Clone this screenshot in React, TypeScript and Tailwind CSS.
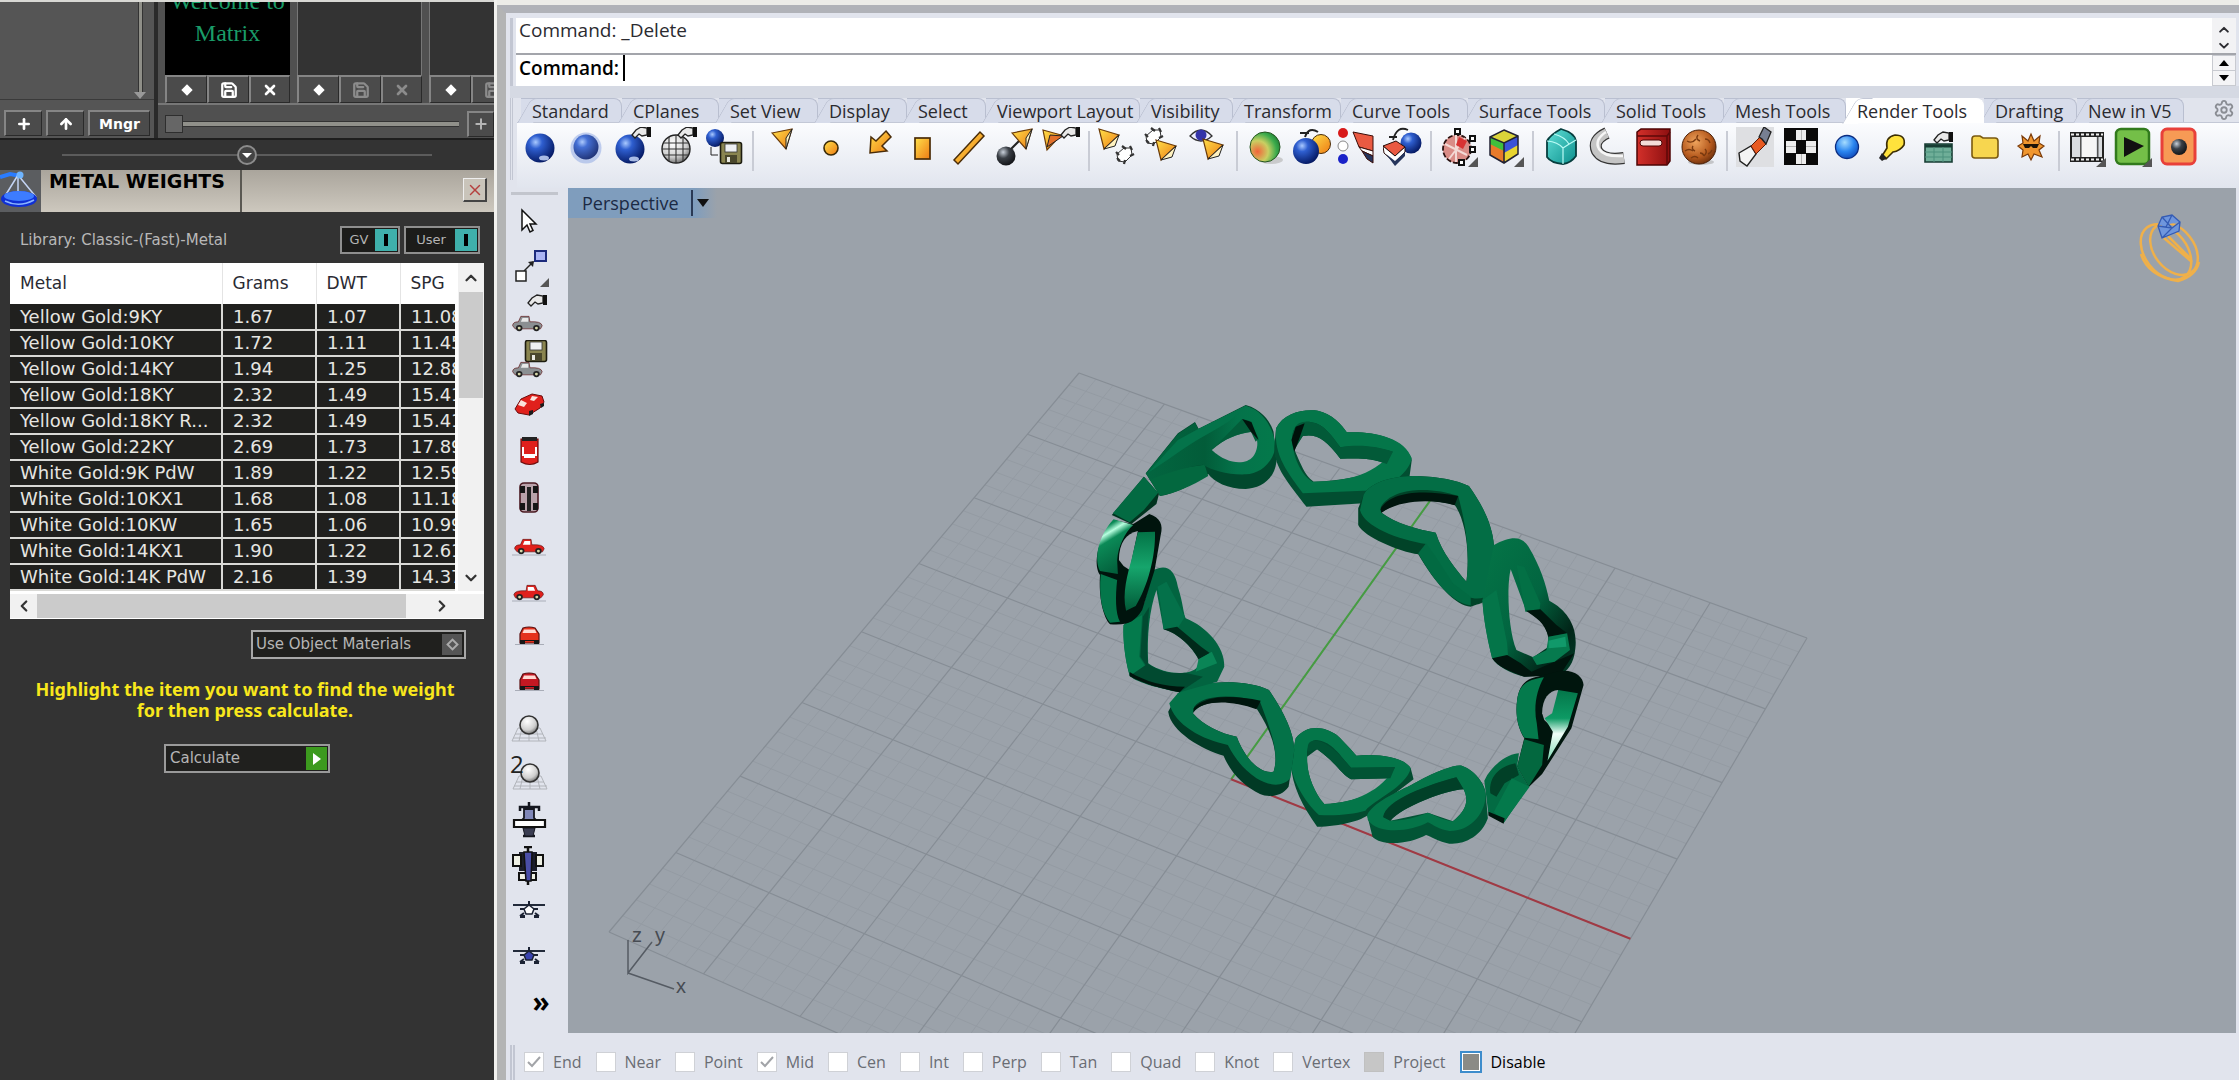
import React from "react";
import { ChevronDown, ChevronLeft, ChevronRight, ChevronUp, X, Plus, Save, ArrowUp, Settings } from "lucide-react";

type Kids = { children: React.ReactNode };

const Ico = ({ children }: Kids) => (
  <svg viewBox="0 0 40 40" className="size-10 shrink-0" aria-hidden="true">
    {children}
  </svg>
);

/* ---------- shared gradients ---------- */
const Defs = () => (
  <svg className="absolute size-0" aria-hidden="true">
    <defs>
      <radialGradient id="gBlue" cx=".35" cy=".3" r=".75">
        <stop offset="0" stopColor="#a9c9ff" />
        <stop offset=".3" stopColor="#2f5fd0" />
        <stop offset="1" stopColor="#03165e" />
      </radialGradient>
      <radialGradient id="gSky" cx=".4" cy=".3" r=".8">
        <stop offset="0" stopColor="#a5dcff" />
        <stop offset=".5" stopColor="#2b86f0" />
        <stop offset="1" stopColor="#0a3fb0" />
      </radialGradient>
      <radialGradient id="gGrey" cx=".4" cy=".3" r=".8">
        <stop offset="0" stopColor="#ffffff" />
        <stop offset=".6" stopColor="#cfcfcf" />
        <stop offset="1" stopColor="#555" />
      </radialGradient>
      <radialGradient id="gBlack" cx=".35" cy=".3" r=".8">
        <stop offset="0" stopColor="#c8d0da" />
        <stop offset=".4" stopColor="#3a3f46" />
        <stop offset="1" stopColor="#0b0c0e" />
      </radialGradient>
      <radialGradient id="gMulti" cx=".25" cy=".65" r=".9">
        <stop offset="0" stopColor="#f2643a" />
        <stop offset=".4" stopColor="#c9cf62" />
        <stop offset=".7" stopColor="#3cab4c" />
        <stop offset="1" stopColor="#136c2c" />
      </radialGradient>
      <radialGradient id="gWood" cx=".4" cy=".35" r=".75">
        <stop offset="0" stopColor="#eea35c" />
        <stop offset=".6" stopColor="#b65a1e" />
        <stop offset="1" stopColor="#5a2508" />
      </radialGradient>
      <linearGradient id="gOr" x1="0" y1="0" x2="1" y2="1">
        <stop offset="0" stopColor="#ffe14a" />
        <stop offset="1" stopColor="#ee7a14" />
      </linearGradient>
      <linearGradient id="gTeal" x1="0" y1="0" x2="1" y2="1">
        <stop offset="0" stopColor="#62e0d8" />
        <stop offset="1" stopColor="#0b8f8c" />
      </linearGradient>
      <linearGradient id="gRed" x1="0" y1="0" x2="1" y2="0">
        <stop offset="0" stopColor="#d3302a" />
        <stop offset="1" stopColor="#8c0f10" />
      </linearGradient>
    </defs>
  </svg>
);

/* ---------- toolbar icon parts ---------- */
const Hand = ({ x, y }: { x: number; y: number }) => (
  <g transform={`translate(${x} ${y})`}>
    <path d="M0 8 4 3 9 0 15 1 15 8 10 9 7 7 3 11Z" fill="#e9e9e9" stroke="#222" strokeWidth="1.3" />
    <path d="M15 0h4v10h-4z" fill="#111" />
  </g>
);
const Floppy = ({ x, y }: { x: number; y: number }) => (
  <g transform={`translate(${x} ${y})`}>
    <rect x=".5" y=".5" width="21" height="21" rx="2" fill="#8a8550" stroke="#1d1c10" strokeWidth="1.6" />
    <rect x="5" y="2" width="12" height="8" fill="#eef0f2" stroke="#333" strokeWidth=".8" />
    <rect x="5" y="13" width="12" height="8" fill="#4a472c" />
    <rect x="7" y="15" width="3" height="5" fill="#e9e9e0" />
  </g>
);
const Spot = ({ x = 0, y = 0 }: { x?: number; y?: number }) => (
  <g transform={`translate(${x} ${y})`}>
    <path d="M0 4 20 0 14 20Z" fill="url(#gOr)" stroke="#6b3b08" strokeWidth="1.2" />
    <path d="M20 0 14 20 14 9Z" fill="#fff2c0" stroke="#222" strokeWidth="1" />
  </g>
);
const SpotDown = ({ x = 0, y = 0 }: { x?: number; y?: number }) => (
  <g transform={`translate(${x} ${y})`}>
    <path d="M0 0 20 6 5 20Z" fill="url(#gOr)" stroke="#6b3b08" strokeWidth="1.2" />
    <path d="M20 6 5 20 16 17Z" fill="#fff2c0" stroke="#222" strokeWidth="1" />
  </g>
);
const Corner = () => <path d="M39 30v10H29Z" fill="#555" />;
const Dots = ({ x, y }: { x: number; y: number }) => (
  <g transform={`translate(${x} ${y})`} fill="#fff" stroke="#333" strokeWidth="1.3">
    <path d="M8 2 15 2 16 9 9 16 2 15 1 8Z" strokeWidth="1" />
    <path d="M6 0l4 3M14 0l2 4M18 8l-4 2M1 12l3 3M8 18l1-4M0 6l3 3" strokeWidth="2.2" />
  </g>
);
const Brick = ({ x, y }: { x: number; y: number }) => (
  <g transform={`translate(${x} ${y})`} stroke="#3a0d08" strokeWidth="1">
    <path d="M0 0 20 4 20 19 6 15Z" fill="#ea5a42" />
    <path d="M6 15 20 19 20 24 9 19Z" fill="#fff" />
    <path d="M9 19 20 24 20 31 14 27Z" fill="#26355c" />
  </g>
);

const toolGroups: { name: string; art: React.ReactNode }[][] = [
  [
    { name: "Render", art: <><circle cx="20" cy="21" r="14.5" fill="url(#gBlue)" /><ellipse cx="24" cy="31" rx="5" ry="2.500" fill="#cfe0ff" opacity=".8" /></> },
    { name: "Render preview", art: <><circle cx="20" cy="21" r="15.500" fill="#7f9be0" opacity=".45" /><circle cx="20" cy="20" r="12.500" fill="url(#gBlue)" opacity=".85" /></> },
    { name: "Render window", art: <><circle cx="18" cy="22" r="14.500" fill="url(#gBlue)" /><ellipse cx="22" cy="32" rx="5" ry="2.500" fill="#cfe0ff" opacity=".8" /><Hand x={20} y={0} /></> },
    { name: "Wire sphere", art: <><circle cx="18" cy="22" r="14" fill="url(#gGrey)" stroke="#222" strokeWidth="1.400" /><path d="M5 16h26M4 22h28M5 28h26M11 10v24M18 8v28M25 10v24" stroke="#333" strokeWidth="1.100" /><Hand x={20} y={0} /></> },
    { name: "Save render", art: <><circle cx="11" cy="11" r="9" fill="url(#gBlue)" /><path d="M7 20v8h7" fill="none" stroke="#222" /><Floppy x={16} y={15} /></> },
  ],
  [
    { name: "Spotlight", art: <Spot x={7} y={2} /> },
    { name: "Point light", art: <circle cx="20" cy="21" r="7" fill="url(#gOr)" stroke="#3a2a08" strokeWidth="1.600" /> },
    { name: "Directional light", art: <path d="M29 4 34 10 25 19 30 24 13 26 14 10 19 14Z" fill="url(#gOr)" stroke="#4a2c08" strokeWidth="1.500" /> },
    { name: "Rectangular light", art: <rect x="12" y="11" width="15" height="21" fill="url(#gOr)" stroke="#4a2c08" strokeWidth="1.700" /> },
    { name: "Linear light", art: <path d="M5 33 31 5 35 9 9 37Z" fill="url(#gOr)" stroke="#4a2c08" strokeWidth="1.500" /> },
    { name: "Edit light", art: <><path d="M12 26 26 12" stroke="#222" strokeWidth="2" /><circle cx="11" cy="29" r="9.500" fill="url(#gBlack)" /><Spot x={17} y={2} /></> },
    { name: "Light by hand", art: <><path d="M2 3 20 8 6 23Z" fill="url(#gOr)" stroke="#6b3b08" strokeWidth="1.200" /><path d="M9 8 22 9 6 20Z" fill="#e3702a" stroke="#222" /><Hand x={20} y={0} /></> },
  ],
  [
    { name: "Light properties", art: <><SpotDown x={2} y={2} /><Dots x={19} y={19} /></> },
    { name: "Set spotlight", art: <><Dots x={2} y={1} /><SpotDown x={13} y={13} /></> },
    { name: "View spotlight", art: <><path d="M1 9Q12-3 23 9 12 19 1 9Z" fill="#eef" stroke="#333" strokeWidth="1.300" /><circle cx="12" cy="8" r="5.500" fill="#3434a8" /><SpotDown x={14} y={12} /></> },
  ],
  [
    { name: "Material", art: <><ellipse cx="26" cy="33" rx="12" ry="4" fill="#bbb" opacity=".7" /><circle cx="20" cy="20" r="15" fill="url(#gMulti)" stroke="#24551f" /></> },
    { name: "Match material", art: <><circle cx="30" cy="17" r="9.500" fill="url(#gOr)" stroke="#4a2c08" /><circle cx="15" cy="24" r="13" fill="url(#gBlue)" /><path d="M9 6h9M14 10Q18-1 27 5" stroke="#222" strokeWidth="2" fill="none" /></> },
    { name: "Layer material", art: <><circle cx="6" cy="6" r="5" fill="#d81a1a" /><circle cx="6" cy="19" r="5" fill="#fff" stroke="#888" /><circle cx="6" cy="32" r="5" fill="#1a22c8" /><Brick x={16} y={5} /></> },
    { name: "Apply material", art: <><circle cx="28" cy="16" r="10.500" fill="url(#gBlue)" /><path d="M0 19 13 14 22 20 12 29Z" fill="#ea5a42" stroke="#2a0d08" /><path d="M0 19 12 29 22 20V25L12 36 1 26Z" fill="#fff" stroke="#2a0d08" /><path d="M3 27 12 34 22 25V29L12 39Z" fill="#26355c" /><path d="M6 10h8M10 13Q14-2 25 3" stroke="#222" strokeWidth="1.800" fill="none" /></> },
  ],
  [
    { name: "Texture mapping", art: <><circle cx="18" cy="22" r="14" fill="#d98c86" stroke="#2a1210" strokeDasharray="5 2" strokeWidth="1.800" /><path d="M6 17 28 28M10 32 26 11M17 8v27" stroke="#f3d9d4" strokeWidth="2" /><path d="M20 10l8 4-4 8-7-4Z" fill="#d83232" /><g fill="#fff" stroke="#111" strokeWidth="2"><path d="M16 2h5v5h-5zM31 9h5v5h-5zM31 20h5v5h-5zM20 33h5v5h-5z" /></g><Corner /></> },
    { name: "Colour cube", art: <><path d="M19 3 33 9 19 16 5 10Z" fill="#d9d43a" /><path d="M5 10 19 16V36L5 28Z" fill="#3fbf3c" /><path d="M5 17 19 24V36L5 28Z" fill="#e87a2a" /><path d="M19 16 33 9V27L19 36Z" fill="#3a52d8" /><path d="M19 26 33 18V27L19 36Z" fill="#e8d430" /><path d="M19 3 33 9V27L19 36 5 28V10ZM5 10 19 16 33 9M19 16V36" fill="none" stroke="#223" strokeWidth="1.500" /><Corner /></> },
  ],
  [
    { name: "Soft edge box", art: <><path d="M20 2Q34 6 35 14V29Q30 36 22 37 10 36 6 30V14Q9 8 20 2Z" fill="url(#gTeal)" stroke="#063e3e" strokeWidth="1.800" /><path d="M6 14Q17 15 22 21 28 17 35 13M22 21V37M13 7Q24 10 28 17" fill="none" stroke="#b9fbf5" strokeWidth="1.200" /></> },
    { name: "Pipe", art: <><path d="M20 6Q5 13 10 24 16 34 37 31" fill="none" stroke="#333" strokeWidth="12" /><path d="M20 6Q5 13 10 24 16 34 37 31" fill="none" stroke="#c4c4c4" strokeWidth="9.500" /><path d="M19 5Q7 13 12 22 17 30 36 29" fill="none" stroke="#f6f6f6" strokeWidth="2.500" /></> },
    { name: "Library", art: <><path d="M4 5 8 2H37V34L34 38H4Z" fill="url(#gRed)" stroke="#4d0505" strokeWidth="1.500" /><path d="M4 9H34L37 5M34 9V38" stroke="#5e0808" strokeWidth="1.500" fill="none" /><rect x="7" y="13" width="22" height="6" rx="3" fill="#f3dcd8" stroke="#4d0505" /></> },
    { name: "Wood", art: <><ellipse cx="22" cy="35" rx="13" ry="3" fill="#aaa" opacity=".6" /><circle cx="20" cy="20" r="17" fill="url(#gWood)" stroke="#4a2008" /><path d="M8 14q5 3 9-2M6 24q4-3 8 0M12 31q4-3 7 0M19 8q-3 4 2 6M14 19q-2 3 2 5M26 22q3 3-1 7M26 12q4 0 5 4M21 26q3 0 4 3M29 27q3-1 4-4" fill="none" stroke="#7a3a10" strokeWidth="1.400" /></> },
  ],
  [
    { name: "Brush", art: <><rect x="1" y="0" width="38" height="40" fill="#dedfe2" /><path d="M4 26 16 19 21 27 12 39 5 34Z" fill="#f4f4f4" stroke="#222" strokeWidth="1.400" /><path d="M16 19 25 10 31 17 21 27Z" fill="#e85a22" stroke="#5a1a08" /><path d="M24 10 29 0 36 5 31 17 27 12Z" fill="#777f92" stroke="#222" strokeWidth="1.300" /></> },
    { name: "Checker", art: <><path d="M3 1h34v37H3z" fill="#0a0a0a" /><path d="M15 3h10v10H15zM5 14h10v12H5zM25 14h10v12H25zM15 27h10v10H15z" fill="#ededed" /><path d="M5 19h10v1H5zM25 19h10v1H25zM20 3v10h1V3zM20 27v10h1V27z" fill="#b5b5b5" /></> },
    { name: "Environment", art: <circle cx="20" cy="20" r="11.500" fill="url(#gSky)" stroke="#0b2c80" strokeWidth="1.300" /> },
    { name: "Lights", art: <><path d="M9 29 14 21Q12 10 22 8 33 8 31 18 27 24 20 25L13 32 8 31Z" fill="#ffe23c" stroke="#3c2e04" strokeWidth="1.600" /><path d="M9 26 14 31 9 34 6 31Z" fill="#222" /></> },
    { name: "Ground plane", art: <><Hand x={15} y={5} /><path d="M6 17h27v18H6z" fill="#6fae98" stroke="#173c33" strokeWidth="1.600" /><path d="M6 19h27" stroke="#173c33" strokeWidth="3" /><path d="M6 25h27M6 30h27M15 20v15M24 20v15" stroke="#4d907c" /></> },
    { name: "Folder", art: <path d="M7 12Q7 9 10 9H15L18 11H30Q33 11 33 14V28Q33 31 30 31H10Q7 31 7 28Z" fill="#f7d64f" stroke="#7a5a10" strokeWidth="1.600" /> },
    { name: "Sun", art: <><path d="M20 7 23 14 29 9 28 16 33 19 28 23 31 30 23 27 20 33 17 27 11 30 12 23 7 19 12 16 11 9 17 14Z" fill="#f0962e" stroke="#7a3a08" strokeWidth="1.200" /><path d="M12 17h16l-2 4h-4l-2-2-2 2h-4z" fill="#1e1408" /></> },
  ],
  [
    { name: "Animation", art: <><path d="M3 5h34v30H3z" fill="#222" /><path d="M5 10h30v20H5z" fill="#d9dce0" /><path d="M13 10h1.500v20H13zM30 10h1.500v20H30z" fill="#555" /><path d="M15 10h14v20H15z" fill="#f6f6f6" /><path d="M4 7.500h32M4 32.500h32" stroke="#eee" strokeWidth="2" strokeDasharray="3 2" /><path d="M39 31v9H29Z" fill="#555" /></> },
    { name: "Play", art: <><rect x="3" y="2" width="33" height="35" rx="5" fill="#74bf48" stroke="#317a1c" strokeWidth="2.500" /><path d="M11 10V30L31 19Z" fill="#111" /><path d="M39 31v9H29Z" fill="#555" /></> },
    { name: "Record", art: <><rect x="3" y="2" width="33" height="35" rx="5" fill="#f79a55" stroke="#e8403a" strokeWidth="3" /><circle cx="20" cy="20" r="8" fill="url(#gBlack)" /></> },
  ],
];

/* ---------- side bar ---------- */
const Car = ({ body, flip = false, glass = "#fff" }: { body: string; flip?: boolean; glass?: string }) => (
  <g transform={flip ? "translate(36 6) scale(-.82 .78)" : "translate(4 6) scale(.82 .78)"}>
    <path d="M2 24Q2 19 9 19L12 12H22L23 19Q37 18 38 24L36 28H5Z" fill={body} stroke="#5b1010" strokeWidth=".8" />
    <path d="M14 14h7v5h-9z" fill={glass} />
    <circle cx="10" cy="27" r="4" fill="#222" />
    <circle cx="31" cy="27" r="4" fill="#222" />
    <circle cx="10" cy="27" r="1.800" fill="#d8d8a8" />
    <circle cx="31" cy="27" r="1.800" fill="#d8d8a8" />
  </g>
);
const Shade = () => <path d="M3 31h34" stroke="#a9adb8" />;
const FrontCar = ({ body }: { body: string }) => (
  <>
    <path d="M14 12Q20 10 26 12L30 18V27H11V18Z" fill={body} stroke="#5b1010" strokeWidth="1.200" />
    <path d="M15 13.500h11l1.500 3.500h-14z" fill="#ffd9d2" />
    <path d="M11 24h5v4h-5zM25 24h5v4h-5zM16 24h9v1h-9z" fill="#161616" />
    <path d="M6 28.500h29" stroke="#a9adb8" />
  </>
);
const GridBall = () => (
  <>
    <path d="M9 20H31L37 33H3ZM6 26H34M4 30H37M13 20 10 33M20 20V33M27 20 30 33" fill="none" stroke="#b1b4ba" />
    <circle cx="20" cy="17" r="9" fill="url(#gGrey)" stroke="#333" strokeWidth="1.600" />
  </>
);
const FrontPlane = ({ fill }: { fill: string }) => (
  <>
    <path d="M4 13H36" stroke="#222a3a" strokeWidth="2" />
    <path d="M20 9v4M11 17h18M15 21l-4 3M26 21l4 3" stroke="#1b2233" strokeWidth="2" />
    <path d="M20 13l5 4-2 5h-6l-2-5z" fill={fill} stroke="#1b2233" strokeWidth="1.500" />
    <path d="M11 23h5v3h-5zM25 23h5v3h-5z" fill="#1b2233" />
  </>
);
const sideTools: { name: string; art: React.ReactNode }[] = [
  { name: "Select", art: <><path d="M13 8V28L18 23 21 30 24 28.500 21 22H27Z" fill="#fff" stroke="#111" strokeWidth="1.500" /></> },
  { name: "Move", art: <><rect x="26" y="3" width="11" height="10" fill="#aab4f4" stroke="#1c2a7c" strokeWidth="2" /><path d="M15 23 24 14" stroke="#222" strokeWidth="1.500" /><path d="M25 13l-1 6-5-5z" fill="#222" /><rect x="7" y="23" width="10" height="10" fill="#fff" stroke="#222" strokeWidth="1.500" /><path d="M40 30v9H31Z" fill="#555" /></> },
  { name: "Set view", art: <><Hand x={19} y={1} /><g transform="translate(-2 7)"><Car body="#8b8f92" glass="#e8e8e8" /></g></> },
  { name: "Save view", art: <><g transform="translate(16 0)"><Floppy x={0} y={0} /></g><g transform="translate(-2 7)"><Car body="#8b8f92" glass="#e8e8e8" /></g></> },
  { name: "Perspective view", art: <><path d="M6 23 12 13 23 8 33 10 35 16 31 22 20 29 9 27Z" fill="#e0201c" stroke="#6b0c0c" strokeWidth="1" /><path d="M12 14l6 3-3 4-6-2zM23 10l6 1-4 4-4-1z" fill="#fbe2dc" /><path d="M20 25l4-1v4l-4 2zM31 18l4-1v3l-3 2z" fill="#1b1b1b" /></> },
  { name: "Top view", art: <><path d="M12 7h17v23q-8 5-17 0z" fill="#e0201c" stroke="#6b0c0c" strokeWidth="1.200" /><path d="M13 5h15v4H13z" fill="#222" /><path d="M14 15v9M27 15v9" stroke="#fff" strokeWidth="2" /><path d="M15 22h11v4H15z" fill="#fff" /></> },
  { name: "Bottom view", art: <><rect x="11" y="5" width="18" height="29" rx="4" fill="#b9a2aa" stroke="#4a1a22" strokeWidth="1.600" /><path d="M11 8h5v7h-5zM24 8h5v7h-5zM11 25h5v7h-5zM24 25h5v7h-5z" fill="#151515" /><path d="M20 9v24" stroke="#222" strokeWidth="4" /></> },
  { name: "Left view", art: <><Car body="#e0201c" /><Shade /></> },
  { name: "Right view", art: <><Car body="#e0201c" flip /><Shade /></> },
  { name: "Front view", art: <FrontCar body="#e5301c" /> },
  { name: "Back view", art: <FrontCar body="#c41822" /> },
  { name: "World CPlane", art: <GridBall /> },
  { name: "CPlane 2", art: <><g transform="translate(1 2)"><GridBall /></g><text x="1" y="19" fontSize="24" fontFamily="Open Sans, sans-serif" fill="#222">2</text></> },
  { name: "Plane top", art: <><path d="M20 2v4M11 11V7H30v4M20 33v4M14 36h12" stroke="#14161f" strokeWidth="2.500" fill="none" /><path d="M15 9h10v9l3 3H12l3-3z" fill="#8087b8" stroke="#14161f" strokeWidth="1.800" /><path d="M14 28h12l-2 8h-8z" fill="#3a3d52" stroke="#14161f" /><path d="M5 20h31v7H5z" fill="#fff" stroke="#111" strokeWidth="2.200" /></> },
  { name: "Plane bottom", art: <><path d="M15 1h8M19 1v5M19 33v6" stroke="#111" strokeWidth="2.500" /><path d="M10 6h18v19H10z" fill="#1b1d2c" /><path d="M4 9h8v11H4zM27 9h7v11h-7zM10 27h17v7H10z" fill="#eef0e4" stroke="#111" strokeWidth="2" /><path d="M15 6h8l-1 29h-5z" fill="#4a4ea8" stroke="#111" strokeWidth="1.500" /></> },
  { name: "Plane front", art: <FrontPlane fill="#fff" /> },
  { name: "Plane back", art: <FrontPlane fill="#3a44b0" /> },
];

const tabs: [string, string][] = [
  ["Standard", "w-[101px]"], ["CPlanes", "w-[97px]"], ["Set View", "w-[99px]"], ["Display", "w-[89px]"],
  ["Select", "w-[79px]"], ["Viewport Layout", "w-[154px]"], ["Visibility", "w-[93px]"], ["Transform", "w-[108px]"],
  ["Curve Tools", "w-[127px]"], ["Surface Tools", "w-[137px]"], ["Solid Tools", "w-[119px]"], ["Mesh Tools", "w-[122px]"],
  ["Render Tools", "w-[138px]"], ["Drafting", "w-[93px]"], ["New in V5", "w-[107px]"],
];

/* ---------- perspective grid ---------- */
const P00 = [609, 932], P10 = [1423, 1292], P11 = [1807, 638], P01 = [1079, 373];
const project = (() => {
  const dx1 = P10[0] - P11[0], dx2 = P01[0] - P11[0], sx = P00[0] - P10[0] + P11[0] - P01[0];
  const dy1 = P10[1] - P11[1], dy2 = P01[1] - P11[1], sy = P00[1] - P10[1] + P11[1] - P01[1];
  const den = dx1 * dy2 - dx2 * dy1;
  const g = (sx * dy2 - dx2 * sy) / den, h = (dx1 * sy - sx * dy1) / den;
  const a = P10[0] - P00[0] + g * P10[0], b = P01[0] - P00[0] + h * P01[0];
  const d = P10[1] - P00[1] + g * P10[1], e = P01[1] - P00[1] + h * P01[1];
  return (u: number, v: number) => {
    const w = g * u + h * v + 1;
    return `${((a * u + b * v + P00[0]) / w).toFixed(1)} ${((d * u + e * v + P00[1]) / w).toFixed(1)}`;
  };
})();
const N = 40;
const gridPath = (major: boolean) => {
  let s = "";
  for (let i = 0; i <= N; i++) {
    if ((i % 5 === 0) !== major) continue;
    const t = i / N;
    s += `M${project(t, 0)}L${project(t, 1)}M${project(0, t)}L${project(1, t)}`;
  }
  return s;
};

const Scene = () => (
  <svg viewBox="568 188 1668 845" preserveAspectRatio="xMidYMid slice" className="absolute inset-0 size-full" role="img" aria-label="Heart ring model">
    <defs>
      <linearGradient id="wallL" x1="0" y1="0" x2="0" y2="1">
        <stop offset="0" stopColor="#037346" /><stop offset=".45" stopColor="#16a56c" /><stop offset="1" stopColor="#025a38" />
      </linearGradient>
      <linearGradient id="shineL" x1="0" y1="0" x2=".4" y2="1">
        <stop offset="0" stopColor="#047848" /><stop offset=".2" stopColor="#0b8a57" /><stop offset=".32" stopColor="#b8ffe0" /><stop offset=".45" stopColor="#0b8a57" /><stop offset="1" stopColor="#03603c" />
      </linearGradient>
      <linearGradient id="shineR" x1="0" y1="0" x2="0" y2="1">
        <stop offset="0" stopColor="#04764a" /><stop offset=".4" stopColor="#0d9a64" /><stop offset=".62" stopColor="#f1fff9" /><stop offset="1" stopColor="#7fd9b4" />
      </linearGradient>
      <linearGradient id="body4" x1="0" y1="0" x2="1" y2="1">
        <stop offset="0" stopColor="#047547" /><stop offset=".5" stopColor="#026540" /><stop offset=".8" stopColor="#012518" /><stop offset="1" stopColor="#02402a" />
      </linearGradient>
      <linearGradient id="face1" x1="0" y1="0" x2="1" y2="0">
        <stop offset="0" stopColor="#036640" /><stop offset=".45" stopColor="#025c39" /><stop offset=".7" stopColor="#04734a" /><stop offset="1" stopColor="#04794b" />
      </linearGradient>
    </defs>
    <path d={gridPath(false)} stroke="#949ba3" fill="none" />
    <path d={gridPath(true)} stroke="#868d95" fill="none" strokeWidth="1.200" />
    <path d={`M${project(0.5, 0.5)}L${project(0.5, 1)}`} stroke="#469c42" strokeWidth="2" />
    <path d={`M${project(0.5, 0.5)}L${project(1, 0.5)}`} stroke="#a03a44" strokeWidth="2" />

    <g transform="translate(1060 370) scale(.35714 .33333)">
      {/* upper left side-on heart */}
      <path d="M240 310 330 190 378 156 388 176 520 105C570 120 590 160 598 185L606 275C600 330 560 355 520 357 470 357 430 335 415 312 370 345 320 372 280 378Z" fill="#01482d" />
      <path d="M240 310 405 284 415 318C370 348 320 370 280 378Z" fill="#03683f" />
      <path d="M242 308 330 192 378 158 388 178 520 107C570 122 595 170 604 225 600 275 560 312 520 313 470 315 425 300 400 284 340 294 290 312 252 330Z" fill="url(#face1)" />
      <path d="M388 176 520 107C500 140 450 170 400 200 350 230 290 280 246 308L330 210Z" fill="#04734a" />
      <path d="M425 240C460 205 500 190 535 185 560 200 555 240 540 260 520 285 470 285 425 240Z" fill="#9ba2aa" />
      <path d="M425 240 510 147 530 152 556 205 548 215 535 186C500 190 460 205 425 240Z" fill="#035d3a" />
      <path d="M510 147 536 156 556 210 535 186Z" fill="#01140d" />
      {/* top heart */}
      <path fillRule="evenodd" d="M605 175C625 130 680 116 722 122 760 130 790 165 803 187 870 183 965 200 985 270L978 325 850 400 690 410C640 340 598 290 600 230ZM655 235C680 300 690 320 710 335 790 332 860 320 915 282 870 262 830 265 785 266 745 210 720 190 680 198Z" fill="#024e31" />
      <path fillRule="evenodd" d="M605 175C625 130 680 116 722 122 760 130 790 165 803 187 870 183 965 200 985 265 975 320 900 365 850 362L680 370C640 310 598 260 605 175ZM650 215C655 270 680 320 708 335 790 332 870 325 932 245 880 228 830 225 785 232 750 180 730 155 690 155 660 160 648 180 650 215Z" fill="#047649" />
      <path d="M650 215C650 170 665 155 690 155 730 155 750 180 785 232 840 222 890 230 932 245L915 282C870 262 830 265 785 266 745 210 720 190 680 198L656 240Z" fill="#025a38" />
      <path d="M648 210 660 170 685 160 672 200 656 245Z" fill="#00110a" />
      {/* upper right heart */}
      <path fillRule="evenodd" d="M850 375C870 335 930 318 1000 318 1060 320 1110 330 1145 348 1180 400 1210 460 1215 525L1235 640C1220 690 1180 700 1150 710 1110 710 1050 640 1003 553 950 545 850 500 835 465V415ZM900 428C940 460 1000 478 1052 488 1070 550 1110 600 1138 635 1150 530 1130 440 1105 405 1040 385 950 385 900 428Z" fill="#014328" />
      <path fillRule="evenodd" d="M850 375C870 335 930 318 1000 318 1060 320 1110 330 1145 348 1180 400 1210 460 1215 525L1235 620C1220 680 1180 695 1140 680 1090 640 1050 580 1025 522 950 510 850 470 840 420ZM900 428C940 460 1000 478 1052 488 1070 550 1110 600 1138 635 1150 530 1130 440 1115 378 1040 350 930 350 898 412Z" fill="#036e45" />
      <path d="M1003 550 1025 520 1052 560 1100 640 1150 680 1150 706C1100 700 1050 640 1003 550Z" fill="#026a42" />
      <path d="M897 418C920 370 1000 355 1115 378L1105 406C1040 385 950 390 900 428Z" fill="#00150d" />
      {/* right heart */}
      <path fillRule="evenodd" d="M1215 525C1260 500 1290 495 1312 530 1345 590 1360 640 1370 692 1420 720 1450 770 1443 835 1440 880 1420 905 1400 915L1300 920C1260 910 1225 890 1210 865 1195 800 1185 740 1183 690ZM1262 598C1250 650 1255 780 1278 840L1325 862 1368 830C1370 790 1360 750 1305 722Z" fill="url(#body4)" />
      <path d="M1183 690 1222 660 1252 820 1255 865 1230 880 1210 865C1195 800 1185 740 1183 690Z" fill="#047549" />
      <path d="M1210 865 1252 855 1290 880 1320 905 1440 850 1400 915 1300 920C1260 905 1225 890 1210 865Z" fill="#01140d" />
      <path d="M1278 585 1300 590 1345 700 1342 725 1303 725 1290 650Z" fill="#037045" />
      <path d="M1305 722 1345 718 1390 765 1420 790 1368 800C1355 755 1335 745 1305 722Z" fill="#00150d" />
      <path d="M1368 800 1420 790 1428 840 1385 875 1335 885 1322 862 1362 840Z" fill="#067a4e" />
      <path d="M1368 812 1415 800 1418 830 1368 835Z" fill="#11996a" />
      {/* far right heart */}
      <path d="M1280 990C1285 950 1300 930 1330 922L1400 903C1440 898 1465 920 1466 945L1432 1075 1350 1212 1312 1252 1280 1190 1300 1105C1280 1070 1275 1030 1280 990Z" fill="#00150d" />
      <path d="M1280 990C1285 950 1300 930 1355 922 1335 960 1325 1010 1335 1060L1340 1108 1300 1103C1280 1070 1275 1030 1280 990Z" fill="#047a4c" />
      <path d="M1300 1108 1355 1125 1350 1185 1312 1250 1280 1190Z" fill="#03683f" />
      <path d="M1350 1030C1350 985 1370 962 1395 960L1385 1080 1356 1050Z" fill="#9ba2aa" />
      <path d="M1395 960 1450 970 1422 1070 1365 1172 1380 1085 1357 1045 1378 1030Z" fill="url(#shineR)" />
      {/* small right link */}
      <path d="M1188 1232C1210 1180 1260 1150 1285 1150L1280 1190 1312 1250 1242 1360 1200 1335Z" fill="#036b43" />
      <path d="M1205 1270C1200 1220 1230 1190 1275 1180L1285 1215 1245 1240 1222 1280Z" fill="#014027" />
      <path d="M1265 1225 1315 1250 1242 1358 1215 1325Z" fill="#04794b" />
      <path d="M1200 1325 1245 1345 1242 1361 1200 1337Z" fill="#01140d" />
      {/* bottom heart, middle */}
      <path fillRule="evenodd" d="M660 1105C690 1062 740 1068 775 1095 800 1120 820 1145 830 1157 890 1150 965 1162 982 1195L990 1228 870 1325C860 1350 780 1370 720 1370 680 1310 650 1250 646 1180ZM692 1160C690 1210 710 1265 740 1302 830 1300 900 1260 925 1225L815 1228C790 1215 770 1175 720 1138Z" fill="#024b2f" />
      <path fillRule="evenodd" d="M660 1105C690 1062 740 1068 775 1095 800 1120 820 1145 830 1157 890 1150 965 1162 982 1195 970 1250 880 1290 855 1322 820 1332 780 1338 725 1335 680 1290 645 1220 646 1170ZM692 1160C690 1210 710 1265 740 1302 830 1300 900 1260 938 1192L815 1193C790 1165 760 1110 715 1110 695 1115 690 1140 692 1160Z" fill="#047649" />
      <path d="M695 1145C690 1120 700 1110 720 1112 760 1120 790 1165 815 1193L938 1192 925 1225 815 1228C790 1215 770 1175 720 1138Z" fill="#015334" />
      {/* bottom heart, right */}
      <path fillRule="evenodd" d="M860 1335C880 1290 960 1260 1000 1235 1060 1200 1110 1182 1125 1187 1160 1200 1190 1240 1192 1270L1198 1345C1180 1400 1130 1425 1090 1421 1060 1415 1040 1400 1025 1395 980 1422 900 1430 875 1400ZM925 1352 1030 1328 1100 1354C1140 1320 1145 1290 1130 1258 1080 1260 960 1310 925 1352Z" fill="#025435" />
      <path fillRule="evenodd" d="M860 1335C880 1290 960 1260 1000 1235 1060 1200 1110 1182 1125 1187 1160 1200 1190 1240 1192 1275 1190 1340 1140 1385 1090 1383 1065 1380 1045 1365 1030 1357 985 1385 890 1395 862 1350ZM905 1340 925 1352C970 1352 1000 1340 1030 1328 1050 1335 1070 1350 1100 1354 1140 1320 1145 1290 1130 1258L1110 1222C1040 1240 920 1290 905 1340Z" fill="#047448" />
      <path d="M905 1342C910 1290 1030 1245 1110 1222L1130 1258C1080 1260 960 1310 925 1352Z" fill="#014028" />
      {/* bottom left heart */}
      <path fillRule="evenodd" d="M330 970C380 930 520 925 585 960 630 1030 660 1100 655 1150L640 1250C620 1282 580 1282 560 1272 520 1250 480 1215 458 1157 400 1140 310 1085 303 1025ZM372 1030C400 1065 450 1092 495 1100 515 1160 560 1215 598 1205 615 1150 590 1080 550 1015 480 990 400 985 372 1030Z" fill="#013a25" />
      <path fillRule="evenodd" d="M330 970C380 930 520 925 585 960 630 1030 660 1100 655 1150L645 1225C620 1255 580 1245 550 1225 510 1195 490 1165 470 1125 400 1110 320 1065 306 1000ZM372 1030C400 1065 450 1092 495 1100 515 1160 560 1215 598 1205 615 1150 590 1080 560 995 480 970 400 975 376 1010Z" fill="#047248" />
      <path d="M374 1015C410 975 480 975 562 992L550 1018C480 990 400 990 374 1025Z" fill="#00150d" />
      {/* left lower heart */}
      <path fillRule="evenodd" d="M262 600C300 580 322 600 330 650 345 700 345 730 352 745 410 770 462 830 460 890L440 935 335 967C280 955 220 940 195 918 180 860 176 800 178 765L235 700ZM270 660C250 720 243 800 247 880 280 905 320 912 350 908 380 905 392 890 388 868 370 830 325 785 290 778Z" fill="#026440" />
      <path d="M178 765 230 735 222 860 240 890 225 925 195 915C180 860 176 800 178 765Z" fill="#047a4c" />
      <path d="M232 740 250 710C243 790 243 850 247 882 290 912 320 910 350 908L400 920 335 967C280 955 230 940 195 918L240 885 225 860Z" fill="#014a30" />
      <path d="M195 906C240 935 290 950 350 950L335 967C280 955 230 940 195 918Z" fill="#00150d" />
      <path d="M273 650 298 635 350 740 325 782 290 778 283 710Z" fill="#04714a" />
      <path d="M290 778 328 770 395 830 420 850 388 868C370 830 330 790 290 778Z" fill="#01291a" />
      <path d="M388 868 425 845 440 880 380 905Z" fill="#0a8556" />
      {/* left heart */}
      <path d="M150 450 205 462 250 432C280 442 290 465 282 495L265 600 230 720C210 755 190 767 140 763 120 740 108 680 112 615 95 590 98 520 150 450Z" fill="#00140d" />
      <path d="M150 448 205 465C180 490 163 530 160 570L162 612 112 603C95 570 105 500 150 448Z" fill="url(#shineL)" />
      <path d="M114 612 160 630C155 680 155 730 168 755L140 758C118 730 108 680 114 612Z" fill="#04764a" />
      <path d="M165 570C165 520 185 490 218 483L195 600 178 588Z" fill="#9ba2aa" />
      <path d="M218 487 266 485C268 560 245 650 212 708L185 722C173 670 190 610 200 570Z" fill="url(#wallL)" />
      {/* left link */}
      <path d="M235 320 277 372 270 402 200 462 145 435Z" fill="#01331f" />
      <path d="M235 320 275 368 235 420 195 457 148 430Z" fill="#036a42" />
    </g>

    <g stroke="#555b63" strokeWidth="1.500" fill="none">
      <path d="M628 940V973L652 942M628 973 674 989" />
    </g>
    <g fontFamily="Liberation Sans, sans-serif" fontSize="20" fill="#474c53">
      <text x="632" y="942">z</text>
      <text x="655" y="942">y</text>
      <text x="676" y="993">x</text>
    </g>

    <g fill="none" stroke="#efb04a" strokeWidth="2.500">
      <ellipse cx="2166" cy="252" rx="21" ry="31" transform="rotate(-38 2166 252)" />
      <ellipse cx="2174" cy="249" rx="20" ry="29" transform="rotate(-38 2174 249)" />
      <path d="M2164 238 2192 262M2168 236 2190 258M2141 254Q2148 276 2178 281 2196 276 2199 262" />
    </g>
    <path d="M2158 226 2162 217 2172 215 2180 222 2179 231 2162 238Z M2158 226 2172 228 2180 222M2162 217 2172 228 2162 238M2172 215 2166 227" fill="#6f96dc" stroke="#345bb4" strokeWidth="1.300" />
  </svg>
);

/* ---------- left panel ---------- */
const metals: string[][] = [
  ["Yellow Gold:9KY", "1.67", "1.07", "11.08"],
  ["Yellow Gold:10KY", "1.72", "1.11", "11.45"],
  ["Yellow Gold:14KY", "1.94", "1.25", "12.88"],
  ["Yellow Gold:18KY", "2.32", "1.49", "15.41"],
  ["Yellow Gold:18KY R...", "2.32", "1.49", "15.41"],
  ["Yellow Gold:22KY", "2.69", "1.73", "17.89"],
  ["White Gold:9K PdW", "1.89", "1.22", "12.59"],
  ["White Gold:10KX1", "1.68", "1.08", "11.18"],
  ["White Gold:10KW", "1.65", "1.06", "10.99"],
  ["White Gold:14KX1", "1.90", "1.22", "12.61"],
  ["White Gold:14K PdW", "2.16", "1.39", "14.37"],
];

const bevel = "flex items-center justify-center border-t-2 border-l-2 border-r border-b border-t-[#858585] border-l-[#858585] border-r-[#2a2a2a] border-b-[#2a2a2a] bg-[#4b4b4b] text-white";

const SlotButtons = ({ dim = false }: { dim?: boolean }) => (
  <div className="flex">
    <button aria-label="Marker" className={`${bevel} h-7 w-[42px] shrink-0`}><span className="size-2 rotate-45 bg-white" /></button>
    <button aria-label="Save" className={`${bevel} h-7 w-[42px] shrink-0`}><Save className={dim ? "size-[18px] text-[#8c8c8c]" : "size-[18px]"} strokeWidth={3} /></button>
    <button aria-label="Clear" className={`${bevel} h-7 w-[41px] shrink-0`}><X className={dim ? "size-4 text-[#8c8c8c]" : "size-4"} strokeWidth={4} /></button>
  </div>
);

const LeftPanel = () => (
  <aside className="flex w-[494px] shrink-0 flex-col border-t-2 border-[#d8d8d4] bg-[#333333] font-['DejaVu_Sans',sans-serif]">
    <div className="flex h-[138px] overflow-hidden border-b-2 border-[#1e1e1e]">
      <div className="flex w-[158px] shrink-0 flex-col border-r-4 border-[#2a2a2a] bg-[#555555]">
        <div className="flex h-[98px] justify-end border-b border-[#3a3a3a] pr-2">
          <div className="flex flex-col items-center">
            <div className="w-[5px] flex-1 border-x border-[#333] bg-[#8f8f88]" />
            <div className="border-x-[6px] border-t-[7px] border-x-transparent border-t-[#999]" />
          </div>
        </div>
        <div className="flex flex-1 items-center gap-1 px-1 pt-2">
          <button aria-label="Add" className={`${bevel} h-[26px] w-[38px]`}><Plus className="size-4" strokeWidth={4} /></button>
          <button aria-label="Up" className={`${bevel} h-[26px] w-[38px]`}><ArrowUp className="size-4" strokeWidth={4} /></button>
          <button className={`${bevel} h-[26px] flex-1 text-sm font-bold`}>Mngr</button>
        </div>
      </div>
      <div className="flex min-w-0 flex-1 flex-col bg-[#505050]">
        <div className="flex gap-[7px] overflow-hidden border-b-2 border-[#777] pl-[7px]">
          <div className="w-[125px] shrink-0">
            <div className="flex h-[73px] flex-col justify-end overflow-hidden bg-black pb-[26px] text-center font-['Liberation_Serif',serif] text-2xl leading-8 text-[#1a9c68]">
              <span className="whitespace-nowrap">Welcome to</span>
              <span>Matrix</span>
            </div>
            <SlotButtons />
          </div>
          <div className="w-[125px] shrink-0">
            <div className="h-[73px] border-x border-[#777] bg-[#333]" />
            <SlotButtons dim />
          </div>
          <div className="w-[125px] shrink-0">
            <div className="h-[73px] border-l border-[#777] bg-[#333]" />
            <SlotButtons dim />
          </div>
        </div>
        <div className="flex flex-1 items-center pt-1 pl-[7px]">
          <span className="h-[18px] w-[18px] border border-[#2e2e2e] bg-[#666]" />
          <span className="h-[6px] flex-1 border-y border-[#333] bg-[#90908a]" />
          <button aria-label="More" className={`${bevel} ml-2 h-[26px] w-[27px]`}><Plus className="size-4 text-[#b5b5b5]" strokeWidth={3} /></button>
        </div>
      </div>
    </div>
    <div className="flex h-[30px] items-center px-[62px]">
      <span className="h-[2px] flex-1 bg-[#5c5c5c]" />
      <button aria-label="Collapse" className="flex size-5 items-center justify-center rounded-full border-2 border-[#8c8c8c] bg-[#444]">
        <span className="border-x-[5px] border-t-[5px] border-x-transparent border-t-white" />
      </button>
      <span className="h-[2px] flex-1 bg-[#5c5c5c]" />
    </div>
    <header className="flex h-[42px] items-start bg-gradient-to-b from-[#aaa59c] to-[#cdc8be]">
      <div className="h-full w-[41px] bg-[#5b5d60]">
        <svg viewBox="0 0 41 42" className="size-full" aria-hidden="true">
          <path d="M0 7 10 4 21 6" stroke="#2a7cff" strokeWidth="4" fill="none" />
          <path d="M18 5 5 26M18 5 36 27M18 5 18 22" stroke="#c4d4f4" strokeWidth="1.500" />
          <circle cx="20" cy="5" r="3.500" fill="#6eb4ff" />
          <ellipse cx="19" cy="29" rx="18" ry="8" fill="#0f2fd4" />
          <ellipse cx="19" cy="26" rx="15" ry="5" fill="#3d7cff" />
          <path d="M5 31Q19 38 34 30" stroke="#8ab4ff" strokeWidth="1.500" fill="none" />
        </svg>
      </div>
      <h1 className="h-full w-[201px] border-r-2 border-[#5a5852] pl-2 text-[19px] leading-[22px] font-bold whitespace-nowrap text-black">METAL WEIGHTS</h1>
      <button aria-label="Close" className="mt-2 mr-[7px] ml-auto flex size-6 items-center justify-center border border-r-2 border-b-2 border-[#eee] border-r-[#444] border-b-[#444] bg-[#c9c4ba]">
        <X className="size-[18px] text-[#b5403f]" strokeWidth={2} />
      </button>
    </header>
    <div className="flex items-center gap-1 pt-[14px] pr-[14px] pl-5">
      <p className="flex-1 text-[15px] leading-6 whitespace-nowrap text-[#b8b8b8]">Library: Classic-(Fast)-Metal</p>
      <button className="flex h-7 w-[60px] items-stretch border-2 border-[#8f8f8f] bg-[#1c1c1a] p-px text-[13px] text-[#b4b4b4]">
        <span className="flex-1 self-center">GV</span>
        <span className="flex w-[22px] items-center justify-center bg-[#3fb0ab]"><span className="h-3 w-1 bg-black" /></span>
      </button>
      <button className="flex h-7 w-[76px] items-stretch border-2 border-[#8f8f8f] bg-[#1c1c1a] p-px text-[13px] text-[#b4b4b4]">
        <span className="flex-1 self-center">User</span>
        <span className="flex w-[22px] items-center justify-center bg-[#3fb0ab]"><span className="h-3 w-1 bg-black" /></span>
      </button>
    </div>
    <div className="mx-[10px] mt-[9px] bg-white pb-px">
      <div className="flex">
        <div className="h-[328px] min-w-0 flex-1 overflow-hidden">
          <table className="w-full table-fixed border-collapse text-lg">
            <thead>
              <tr className="h-[41px] text-left text-[17px] text-[#2a2a33]">
                <th className="w-[212px] border-r border-[#e4e4e4] pl-[10px] font-normal">Metal</th>
                <th className="w-[94px] border-r border-[#e4e4e4] pl-[10px] font-normal">Grams</th>
                <th className="w-[84px] border-r border-[#e4e4e4] pl-[10px] font-normal">DWT</th>
                <th className="pl-[10px] font-normal">SPG</th>
              </tr>
            </thead>
            <tbody>
              {metals.map((row) => (
                <tr key={row[0]} className="h-[26px] border-b-2 border-[#d9d9d6] bg-[#20201e] text-[#e6e6e2]">
                  {row.map((cell, i) => (
                    <td key={i} className="overflow-hidden border-r-2 border-[#d9d9d6] py-0 pl-[10px] leading-6 whitespace-nowrap last:border-r-0">{cell}</td>
                  ))}
                </tr>
              ))}
            </tbody>
          </table>
        </div>
        <div className="ml-[3px] flex w-[26px] flex-col items-center bg-[#f1f1f1]">
          <button aria-label="Scroll up" className="flex h-[29px] items-center"><ChevronUp className="size-[18px] text-[#333]" strokeWidth={3} /></button>
          <span className="h-[106px] w-6 bg-[#cbcbcb]" />
          <span className="flex-1" />
          <button aria-label="Scroll down" className="flex h-[26px] items-center"><ChevronDown className="size-[18px] text-[#333]" strokeWidth={3} /></button>
        </div>
      </div>
      <div className="mt-[3px] flex h-6 items-center bg-[#f1f1f1]">
        <button aria-label="Scroll left" className="flex w-[27px] justify-center"><ChevronLeft className="size-[18px] text-[#333]" strokeWidth={3} /></button>
        <span className="h-full flex-1 bg-[#cbcbcb]" />
        <button aria-label="Scroll right" className="mr-[30px] ml-[24px] flex w-6 justify-center"><ChevronRight className="size-[18px] text-[#333]" strokeWidth={3} /></button>
      </div>
    </div>
    <div className="relative mt-[11px] mr-[28px] h-[29px] w-[215px] self-end">
      <select aria-label="Materials source" className="size-full appearance-none border-2 border-[#a8a8a8] bg-[#20201e] pl-[3px] text-[15px] text-[#b5b5b5]">
        <option>Use Object Materials</option>
      </select>
      <span className="pointer-events-none absolute top-1 right-1 flex h-[21px] w-5 items-center justify-center bg-[#555]">
        <span className="size-[9px] rotate-45 border-2 border-[#aaa]" />
      </span>
    </div>
    <p className="mt-5 pr-1 text-center font-['Noto_Sans',sans-serif] text-lg leading-[21px] font-bold text-[#f8e71c]">
      Highlight the item you want to find the weight
      <br />
      for then press calculate.
    </p>
    <button className="mt-[23px] mr-auto ml-[164px] flex h-[29px] w-[166px] items-center border-2 border-[#9a9a9a] bg-[#20201e] p-px pl-1 text-[15px] text-[#b5b5b5]">
      <span className="flex-1 text-left">Calculate</span>
      <span className="flex h-full w-[21px] items-center justify-center bg-[#3c9a1e]">
        <span className="border-y-[6px] border-l-[8px] border-y-transparent border-l-white" />
      </span>
    </button>
  </aside>
);

const snaps: [string, boolean][] = [
  ["End", true], ["Near", false], ["Point", false], ["Mid", true], ["Cen", false], ["Int", false], ["Perp", false],
  ["Tan", false], ["Quad", false], ["Knot", false], ["Vertex", false], ["Project", false], ["Disable", false],
];

const snapBox = (name: string) =>
  name === "Disable"
    ? "size-[22px] border-2 border-[#3d8ccc] bg-[#8b8b86] ring-1 ring-inset ring-white"
    : name === "Project"
      ? "size-5 border border-[#c0c0c0] bg-[#c6c6c6]"
      : "size-5 border border-[#cfd1d6] bg-white";

export default function App() {
  return (
    <div className="flex h-screen overflow-hidden bg-[#e1e4ed] font-['Open_Sans',sans-serif] text-[#2b2b30]">
      <Defs />
      <LeftPanel />
      <div className="w-[3px] shrink-0 bg-[#f1f1ee]" />
      <main className="flex min-w-0 flex-1 flex-col border-t-[5px] border-[#ecece8]">
        <div className="flex min-h-0 flex-1 border-t-8 border-l-[9px] border-t-[#b0b2b8] border-l-[#b3b4b4]">
          <div className="flex min-w-0 flex-1 flex-col">
            {/* command area */}
            <section className="ml-1 border-b-[12px] border-[#d5d9e3] pt-[5px] pr-[3px]">
              <div className="flex border-l-[3px] border-[#c2c6d2] pl-[3px]">
                <div className="flex min-w-0 flex-1 flex-col">
                  <div className="flex h-[37px] border-b-2 border-[#a3a5ab] bg-white">
                    <p className="flex-1 pl-[3px] text-[19px] leading-6">Command: _Delete</p>
                    <div className="flex w-6 flex-col items-center justify-around bg-[#f2f2f4] pt-1">
                      <ChevronUp className="size-4" strokeWidth={3} />
                      <ChevronDown className="size-4" strokeWidth={3} />
                    </div>
                  </div>
                  <div className="flex h-[31px] bg-white pl-[3px]">
                    <label htmlFor="cmd" className="mr-1 text-[19px] leading-[26px] font-semibold text-black">Command:</label>
                    <input id="cmd" className="h-[26px] min-w-0 flex-1 border-l-2 border-black outline-none" />
                    <div className="flex w-6 flex-col gap-px border border-[#c8cad0] bg-[#c8cad0]">
                      <button aria-label="Previous" className="flex flex-1 items-center justify-center bg-[#f4f4f6]"><span className="border-x-[5px] border-b-[6px] border-x-transparent border-b-black" /></button>
                      <button aria-label="Next" className="flex flex-1 items-center justify-center bg-[#f4f4f6]"><span className="border-x-[5px] border-t-[6px] border-x-transparent border-t-black" /></button>
                    </div>
                  </div>
                </div>
              </div>
            </section>
            {/* tabs and tools */}
            <section className="ml-1 flex">
              <div className="h-[82px] w-[3px] border-x border-[#c2c6d2]" />
              <div className="min-w-0 flex-1 pl-1">
                <div className="flex h-[25px] items-stretch border-b border-[#c3c8d6] pl-1" role="tablist">
                  {tabs.map(([t, w]) => {
                    const on = t === "Render Tools";
                    return (
                      <button
                        key={t}
                        role="tab"
                        aria-selected={on}
                        className={`${w} ${
                          on
                            ? "z-10 -mb-px border-white bg-white before:border-[#c3c8d6] before:bg-white"
                            : "border-[#b9bfd0] bg-[#d7dcea] before:border-[#b9bfd0] before:bg-[#d7dcea]"
                        } relative shrink-0 rounded-tr-lg border-t border-r text-left text-lg leading-[22px] whitespace-nowrap before:absolute before:-top-px before:-left-1 before:-bottom-px before:w-4 before:origin-bottom before:-skew-x-[30deg] before:rounded-tl-md before:border-t before:border-l`}
                      >
                        <span className="relative pl-[11px]">{t}</span>
                      </button>
                    );
                  })}
                  <button aria-label="Toolbar options" className="mr-1 ml-auto"><Settings className="size-[22px] text-[#8a8d94]" strokeWidth={2} /></button>
                </div>
                <div className="flex h-[65px] items-start bg-gradient-to-b from-[#fbfcfe] to-[#e1e5ee] pt-1">
                  {toolGroups.map((group, gi) => (
                    <React.Fragment key={gi}>
                      {gi > 0 && <span className={`${gi === 1 ? "mr-2 ml-[5px]" : "mx-1"} mt-1 h-10 w-0.5 bg-[#c9ccd5]`} />}
                      {group.map((tool) => (
                        <button key={tool.name} aria-label={tool.name} className="flex w-[46px] shrink-0 justify-center"><Ico>{tool.art}</Ico></button>
                      ))}
                    </React.Fragment>
                  ))}
                </div>
              </div>
            </section>
            {/* side bar and viewport */}
            <section className="flex min-h-0 flex-1 pr-[3px]">
              <nav className="flex w-[62px] shrink-0 flex-col pl-[5px]">
                <span className="mt-1 mb-1 h-[3px] w-[47px] shrink-0 bg-[#c2c5cd]" />
                {sideTools.map((tool) => (
                  <button key={tool.name} aria-label={tool.name} className="flex h-[46px] w-9 shrink-0 items-center justify-center"><Ico>{tool.art}</Ico></button>
                ))}
                <button aria-label="More tools" className="ml-3 w-9 text-[28px] leading-[40px] font-bold text-black">»</button>
              </nav>
              <div className="relative min-w-0 flex-1 overflow-hidden bg-[#9ba2aa]">
                <Scene />
                <div className="absolute top-0 left-0 flex h-[30px] items-center bg-gradient-to-r from-[#7f9dbd] from-85% to-[#9ba2aa] pr-2 pl-[14px] text-lg text-[#1b2a44]">
                  Perspective
                  <button aria-label="Viewport menu" className="ml-3 flex h-[26px] items-center border-l-2 border-[#2a3a55] pl-1"><span className="border-x-[6px] border-t-[8px] border-x-transparent border-t-[#111]" /></button>
                </div>
              </div>
            </section>
            {/* object snaps */}
            <footer className="flex h-[47px] shrink-0 items-center pt-3 pl-1">
              <span className="h-full w-[5px] border-x-2 border-[#c2c6d2]" />
              <div className="flex items-center gap-[14px] pb-px pl-[9px]">
                {snaps.map(([name, on]) => (
                  <label key={name} className={`flex items-center gap-[9px] text-base ${name === "Disable" ? "text-black" : "text-[#6a6d74]"}`}>
                    <span className="relative flex">
                      <input type="checkbox" defaultChecked={on} className={`${snapBox(name)} appearance-none`} />
                      {on && (
                        <svg viewBox="0 0 20 20" className="pointer-events-none absolute inset-0 size-5" aria-hidden="true">
                          <path d="M4 10 8 14 16 5" fill="none" stroke="#a2a4a8" strokeWidth="2" />
                        </svg>
                      )}
                    </span>
                    {name}
                  </label>
                ))}
              </div>
            </footer>
          </div>
        </div>
      </main>
    </div>
  );
}
